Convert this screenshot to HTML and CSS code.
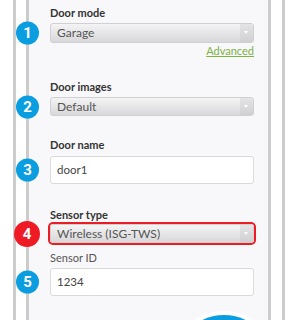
FILE: index.html
```
<!DOCTYPE html>
<html lang="en">
<head>
  <meta charset="UTF-8">
  <title>Door settings</title>
  <link rel="stylesheet" href="styles.css">
</head>
<body>
  <div class="device">
    <div class="screen">
      <div class="field f-mode">
        <div class="label">Door mode</div>
        <div class="control">
          <span class="badge">1</span>
          <div class="select">Garage<span class="arrow"></span></div>
        </div>
        <div class="advanced"><a href="#">Advanced</a></div>
      </div>

      <div class="field f-images">
        <div class="label">Door images</div>
        <div class="control">
          <span class="badge">2</span>
          <div class="select">Default<span class="arrow"></span></div>
        </div>
      </div>

      <div class="field f-name">
        <div class="label">Door name</div>
        <div class="control">
          <span class="badge">3</span>
          <div class="input">door1</div>
        </div>
      </div>

      <div class="field f-sensor">
        <div class="label">Sensor type</div>
        <div class="control">
          <span class="badge red">4</span>
          <div class="select marked">Wireless (ISG-TWS)<span class="arrow"></span></div>
        </div>
      </div>

      <div class="field f-id">
        <div class="label light">Sensor ID</div>
        <div class="control">
          <span class="badge">5</span>
          <div class="input">1234</div>
        </div>
      </div>

      <!-- save button peeking in at the bottom -->
      <div class="fab-wrap"><div class="fab"></div></div>
    </div>
  </div>
</body>
</html>
```
FILE: styles.css
```
body {
  margin: 0;
  background: #fff;
  font-family: Lato, "Open Sans", sans-serif;
  overflow: hidden;
  height: 320px;
}
.device {
  margin-left: 13px;
  width: 272px;
  height: 320px;
  box-sizing: border-box;
  border-left: 3px solid #cccccc;
  border-right: 3px solid #cccccc;
  padding: 0 11px 0 10px;
}
.screen {
  position: relative;
  height: 320px;
  box-sizing: border-box;
  background: #f8f7fa;
  border-left: 3px solid #cccccc;
  border-right: 3px solid #cccccc;
  padding: 6px 14px 0 21px;
}
.label {
  font-size: 11px;
  line-height: 14px;
  font-weight: bold;
  color: #333;
  margin-bottom: 3px;
}
.label.light {
  font-weight: normal;
  color: #555;
}
.control {
  position: relative;
}
.badge {
  position: absolute;
  z-index: 1;
  left: -34px;
  top: 50%;
  transform: translateY(-50%);
  width: 23px;
  height: 23px;
  border-radius: 50%;
  background: #0a9de0;
  color: #fff;
  font-family: Roboto, sans-serif;
  font-weight: bold;
  font-size: 15px;
  line-height: 23px;
  text-align: center;
}
.badge.red {
  left: -36px;
  width: 26px;
  height: 26px;
  line-height: 26px;
  background: #ee1b24;
}
.select {
  position: relative;
  height: 20px;
  box-sizing: border-box;
  border: 1px solid #d0d0d2;
  border-radius: 3px;
  background: linear-gradient(#f4f4f5, #d8d8da);
  padding-left: 6px;
  font-size: 12px;
  line-height: 18px;
  color: #555;
}
.select.marked {
  height: 19px;
  line-height: 17px;
  box-shadow: 0 0 0 2px #ec1c24;
}
.arrow {
  position: absolute;
  right: 0;
  top: 0;
  bottom: 0;
  width: 13px;
  border-radius: 0 2px 2px 0;
  background: linear-gradient(#e4e4e6, #d0d0d2);
}
.arrow::after {
  content: "";
  position: absolute;
  left: 4px;
  top: 7px;
  border-left: 2.5px solid transparent;
  border-right: 2.5px solid transparent;
  border-top: 3px solid #fff;
}
.input {
  height: 28px;
  box-sizing: border-box;
  border: 1px solid #dadada;
  border-radius: 3px;
  background: #fff;
  padding-left: 6px;
  font-size: 11.5px;
  line-height: 26px;
  color: #444;
}
.advanced {
  text-align: right;
  font-size: 11px;
  line-height: 16px;
}
.advanced a {
  color: #7cb342;
  text-decoration: underline;
}
.f-images { margin-top: 21px; }
.f-images .select { height: 19px; line-height: 17px; }
.f-name { margin-top: 22px; }
.f-name .label { margin-bottom: 4px; }
.f-sensor { margin-top: 24px; }
.f-sensor .label { margin-bottom: 2px; }
.f-sensor .select { margin-top: 1px; }
.f-id { margin-top: 8px; }
.fab-wrap {
  position: absolute;
  left: 143px;
  top: 311px;
  width: 104px;
  height: 9px;
  overflow: hidden;
}
.fab {
  width: 96px;
  height: 96px;
  border-radius: 50%;
  background: #0a9de0;
  border: 4px solid #fff;
}
```
